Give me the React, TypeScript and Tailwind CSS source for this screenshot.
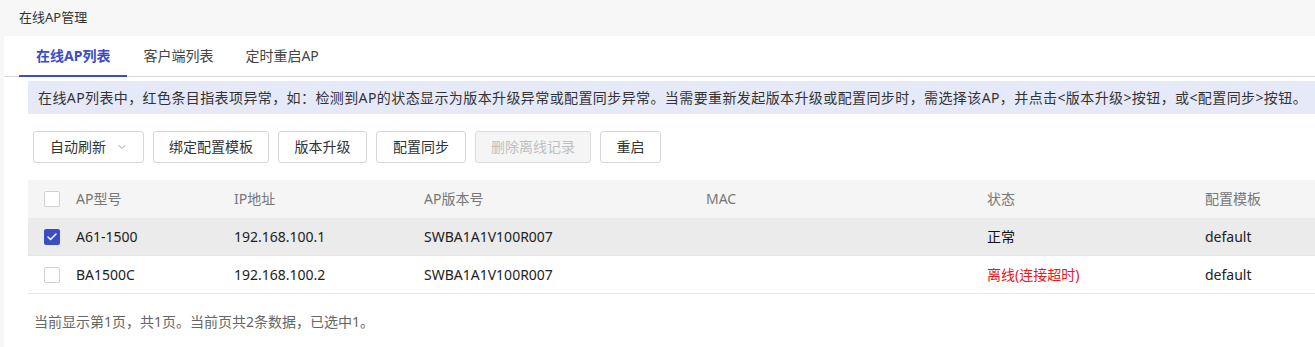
import { Check, ChevronDown } from 'lucide-react'

const font = { fontFamily: '"Noto Sans", "Noto Sans CJK SC", sans-serif' }

type Row = {
  model: string
  ip: string
  version: string
  mac: string
  status: string
  error: boolean
  template: string
  checked: boolean
}

const rows: Row[] = [
  {
    model: 'A61-1500',
    ip: '192.168.100.1',
    version: 'SWBA1A1V100R007',
    mac: '',
    status: '正常',
    error: false,
    template: 'default',
    checked: true,
  },
  {
    model: 'BA1500C',
    ip: '192.168.100.2',
    version: 'SWBA1A1V100R007',
    mac: '',
    status: '离线(连接超时)',
    error: true,
    template: 'default',
    checked: false,
  },
]

const cols = 'grid grid-cols-[48px_158px_190px_282px_281px_218px_1fr] items-center'

const Box = ({ checked }: { checked: boolean }) =>
  checked ? (
    <span className="flex h-4 w-4 items-center justify-center rounded-[2px] bg-[#3b4cc4]">
      <Check className="h-3 w-3 text-white" strokeWidth={3} />
    </span>
  ) : (
    <span className="block h-4 w-4 rounded-[2px] border border-[#d0d0d0] bg-white" />
  )

const Btn = ({ label, w, disabled }: { label: string; w: string; disabled?: boolean }) => (
  <button
    className={`${w} h-[32px] rounded-[3px] border text-sm ${
      disabled
        ? 'border-[#dcdcdc] bg-[#f5f5f5] text-[#c0c0c0]'
        : 'border-[#d6d6d6] bg-white text-[#333]'
    }`}
  >
    {label}
  </button>
)

export default function App() {
  return (
    <div style={font} className="min-h-[347px] bg-[#f7f7f7] text-[#333]">
      <div className="flex h-9 items-center pl-[19px] text-[13px] text-[#333]">在线AP管理</div>
      <div className="ml-1 min-h-[311px] bg-white">
        <div className="flex h-[41px] items-end border-b border-[#d9d9d9] pl-[15px]">
          <div className="-mb-px flex h-[41px] items-center border-b-2 border-[#3b4cc4] px-[17px] text-sm font-bold text-[#3b4cc4]">
            在线AP列表
          </div>
          <div className="flex h-[41px] items-center px-4 text-sm text-[#444]">客户端列表</div>
          <div className="flex h-[41px] items-center px-4 text-sm text-[#444]">定时重启AP</div>
        </div>
        <div className="pl-6 pt-1">
          <div className="flex h-[33px] items-center whitespace-nowrap bg-[#e6e9f7] pl-[10px] text-sm tracking-[0.4px] text-[#333]">
            在线AP列表中，红色条目指表项异常，如：检测到AP的状态显示为版本升级异常或配置同步异常。当需要重新发起版本升级或配置同步时，需选择该AP，并点击&lt;版本升级&gt;按钮，或&lt;配置同步&gt;按钮。
          </div>
          <div className="flex gap-[9px] pl-[5px] pt-[17px]">
            <button className="flex h-[32px] w-[111px] items-center rounded-[3px] border border-[#d6d6d6] bg-white pl-4 text-sm text-[#333]">
              自动刷新
              <ChevronDown className="ml-[10px] h-3 w-3 text-[#888]" strokeWidth={1.75} />
            </button>
            <Btn label="绑定配置模板" w="w-[116px]" />
            <Btn label="版本升级" w="w-[89px]" />
            <Btn label="配置同步" w="w-[90px]" />
            <Btn label="删除离线记录" w="w-[116px]" disabled />
            <Btn label="重启" w="w-[61px]" />
          </div>
          <div className="mt-[17px]">
            <div className={`${cols} h-[38px] bg-[#f5f5f5] text-sm text-[#777]`}>
              <div className="pl-4">
                <Box checked={false} />
              </div>
              <div>AP型号</div>
              <div>IP地址</div>
              <div>AP版本号</div>
              <div>MAC</div>
              <div>状态</div>
              <div>配置模板</div>
            </div>
            {rows.map((r) => (
              <div
                key={r.model}
                className={`${cols} h-[38px] border-b border-[#e6e6e6] text-sm text-[#222] ${
                  r.checked ? 'bg-[#ebebeb]' : 'bg-white'
                }`}
              >
                <div className="pl-4">
                  <Box checked={r.checked} />
                </div>
                <div>{r.model}</div>
                <div>{r.ip}</div>
                <div>{r.version}</div>
                <div>{r.mac}</div>
                <div className={r.error ? 'text-[#e0201e]' : 'text-[#111]'}>{r.status}</div>
                <div>{r.template}</div>
              </div>
            ))}
          </div>
          <div className="pl-[6px] pt-[18px] text-sm text-[#666]">
            当前显示第1页，共1页。当前页共2条数据，已选中1。
          </div>
        </div>
      </div>
    </div>
  )
}
